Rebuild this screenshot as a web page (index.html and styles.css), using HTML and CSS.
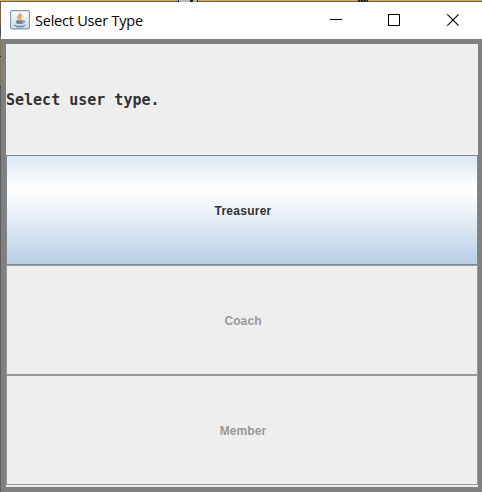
FILE: index.html
```html
<!DOCTYPE html>
<html lang="en">
<head>
<meta charset="utf-8">
<title>Select User Type</title>
<link rel="stylesheet" href="styles.css">
</head>
<body>
<div class="desktop">
  <span class="speck speck-a"></span>
  <span class="speck speck-b"></span>
  <div class="window">
    <header class="titlebar">
      <svg class="app-icon" width="20" height="20" viewBox="0 0 20 20">
        <defs>
          <linearGradient id="tile" x1="0" y1="0" x2="0" y2="1">
            <stop offset="0" stop-color="#fbfcfd"/>
            <stop offset="1" stop-color="#cfd9e3"/>
          </linearGradient>
        </defs>
        <rect x=".6" y=".6" width="18.8" height="18.3" rx="1.5" fill="url(#tile)" stroke="#7f9ab4" stroke-width="1.1"/>
        <path d="M10.4 3c.8 1.7-3.1 2.7-2.6 4.5.2.8 1.3 1.3 1.3 2.3M12 5.2C9.6 6.4 9.6 7.2 10.4 8c.6.7.3 1.3-.2 1.7" fill="none" stroke="#ee8c43" stroke-width="1.4"/>
        <path d="M5.8 10.6h7.2v1.4c0 1.2-.9 2-2 2H8c-1.2 0-2-.8-2-2z" fill="#6d8ca5"/>
        <path d="M7 11.2h5M13 10.9c2.5-.6 2.4 1.8-.5 2.2" fill="none" stroke="#54758f"/>
        <path d="M4 15c2.5 1.7 8.5 1.7 11.5 0M6 16.4c2.5.7 5 .7 7.5 0" fill="none" stroke="#6e8ca3" stroke-width="1.2"/>
      </svg>
      <h1 class="title">Select User Type</h1>
      <svg class="controls" width="134" height="14" viewBox="0 0 134 14" fill="none" stroke="#000">
        <path d="M0 6.5h12" shape-rendering="crispEdges"/>
        <rect x="58.5" y="1.5" width="11" height="11" shape-rendering="crispEdges"/>
        <path d="M117.3 1.3l11.4 11.4M128.7 1.3l-11.4 11.4" stroke-width="1.1"/>
      </svg>
    </header>
    <main class="content">
      <p class="prompt">Select user type.</p>
      <button class="choice primary">Treasurer</button>
      <button class="choice" disabled>Coach</button>
      <button class="choice" disabled>Member</button>
    </main>
  </div>
</div>
</body>
</html>
```
FILE: styles.css
```css
body {
  margin: 0;
  overflow: hidden;
}

.desktop {
  position: relative;
  box-sizing: border-box;
  width: 482px;
  height: 492px;
  padding: 2px 0 0 1px;
  background: linear-gradient(#cba76f 0 1px, #796044 1px 2px, #77634b 2px 26px, #4b4b4b 26px 36px, #84735b 36px 56px, #222 56px 57px, #84735b 57px 86px, #222 86px 87px, #5e5e5e 87px);
}

.speck {
  position: absolute;
  top: 0;
  height: 2px;
}

.speck-a {
  left: 178px;
  width: 20px;
  background: linear-gradient(90deg, #222 0 1px, #bbb 1px 12px, #222 12px 15px, #aaa 15px 19px, #222 19px);
}

.speck-b {
  left: 358px;
  width: 10px;
  background: repeating-linear-gradient(90deg, #222 0 2px, #665a48 2px 3px);
}

.window {
  display: flex;
  flex-direction: column;
  height: 490px;
  background: #808080;
}

.titlebar {
  display: flex;
  align-items: center;
  height: 37px;
  background: #fff;
}

.app-icon {
  margin: 0 5px 1px 9px;
}

.title {
  flex: 1;
  margin: 0;
  font: 400 14.5px/20px "Open Sans", sans-serif;
  letter-spacing: -0.22px;
  color: #000;
}

.controls {
  margin: 0 18px 2px 0;
}

.content {
  display: grid;
  grid-template-rows: 111px repeat(3, 110px);
  width: 472px;
  height: 443px;
  margin: 5px 0 0 5px;
  background: #eee;
}

.prompt {
  display: flex;
  align-items: center;
  margin: 0;
  font: 700 15px/20px "DejaVu Sans Mono", monospace;
  color: #333;
}

.choice {
  width: 472px;
  padding: 2px 0 0 2px;
  border: 1px solid #999;
  border-radius: 0;
  background: #eee;
  font: 700 12px/16px "Liberation Sans", sans-serif;
  letter-spacing: 0.1px;
  color: #999;
}

.primary {
  border-color: #7a8a99;
  background: linear-gradient(#dde8f3 0, #fff 30%, #fff 33%, #b8cfe5 100%);
  letter-spacing: 0.25px;
  color: #333;
}
```
